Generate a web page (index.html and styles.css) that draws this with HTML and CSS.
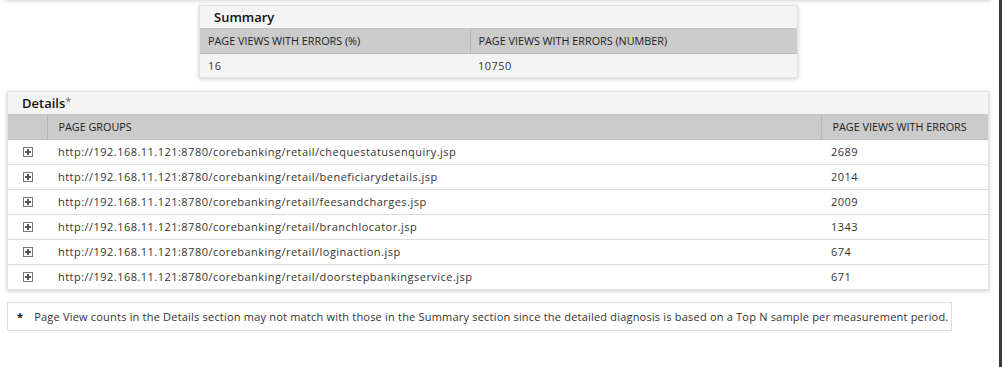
FILE: index.html
```html
<!DOCTYPE html>
<html lang="en">
<head>
    <meta charset="UTF-8">
    <title>Page Views With Errors</title>
    <link rel="stylesheet" href="styles.css">
</head>
<body>
    <div class="page">
        <div class="content">
            <div class="panel-edge"></div>

            <div class="panel summary">
                <h3 class="panel-title">Summary</h3>
                <table class="grid">
                    <thead>
                        <tr>
                            <th class="col-pct">PAGE VIEWS WITH ERRORS (%)</th>
                            <th>PAGE VIEWS WITH ERRORS (NUMBER)</th>
                        </tr>
                    </thead>
                    <tbody>
                        <tr>
                            <td>16</td>
                            <td>10750</td>
                        </tr>
                    </tbody>
                </table>
            </div>

            <div class="panel details">
                <h3 class="panel-title">Details<span class="star">*</span></h3>
                <table class="grid">
                    <thead>
                        <tr>
                            <th class="col-toggle"></th>
                            <th>PAGE GROUPS</th>
                            <th class="col-count">PAGE VIEWS WITH ERRORS</th>
                        </tr>
                    </thead>
                    <tbody>
                        <tr>
                            <td class="col-toggle"><span class="expand"></span></td>
                            <td>http://192.168.11.121:8780/corebanking/retail/chequestatusenquiry.jsp</td>
                            <td>2689</td>
                        </tr>
                        <tr>
                            <td class="col-toggle"><span class="expand"></span></td>
                            <td>http://192.168.11.121:8780/corebanking/retail/beneficiarydetails.jsp</td>
                            <td>2014</td>
                        </tr>
                        <tr>
                            <td class="col-toggle"><span class="expand"></span></td>
                            <td>http://192.168.11.121:8780/corebanking/retail/feesandcharges.jsp</td>
                            <td>2009</td>
                        </tr>
                        <tr>
                            <td class="col-toggle"><span class="expand"></span></td>
                            <td>http://192.168.11.121:8780/corebanking/retail/branchlocator.jsp</td>
                            <td>1343</td>
                        </tr>
                        <tr>
                            <td class="col-toggle"><span class="expand"></span></td>
                            <td>http://192.168.11.121:8780/corebanking/retail/loginaction.jsp</td>
                            <td>674</td>
                        </tr>
                        <tr>
                            <td class="col-toggle"><span class="expand"></span></td>
                            <td>http://192.168.11.121:8780/corebanking/retail/doorstepbankingservice.jsp</td>
                            <td>671</td>
                        </tr>
                    </tbody>
                </table>
            </div>

            <div class="note">
                <span class="note-mark">*</span>
                <span>Page View counts in the Details section may not match with those in the Summary section since the detailed diagnosis is based on a Top N sample per measurement period.</span>
            </div>
        </div>
        <div class="frame-edge"></div>
    </div>
</body>
</html>
```

FILE: styles.css
```css
* {
    margin: 0;
    padding: 0;
    box-sizing: border-box;
}

body {
    font-family: "Open Sans", "DejaVu Sans", sans-serif;
    font-size: 11px;
    color: #333;
    background: white;
    overflow: hidden;
}

.page {
    display: flex;
    height: 367px;
}

.content {
    flex: 1;
    display: flex;
    flex-direction: column;
    align-items: flex-start;
    padding: 0 0 0 7px;
}

.frame-edge {
    width: 3px;
    background: #3a3a3a;
}

/* bottom of the panel scrolled above */
.panel-edge {
    width: 985px;
    height: 6px;
    margin: -6px 0 0 -2px;
    background: white;
    box-shadow: 0 1px 4px rgba(0, 0, 0, 0.18);
}

.panel {
    background: white;
    border: 1px solid #e2e2e2;
    box-shadow: 0 1px 4px rgba(0, 0, 0, 0.22);
}

.summary {
    width: 599px;
    margin: 5px 0 0 192px;
}

.details {
    width: 982px;
    margin-top: 13px;
}

.panel-title {
    background: #f4f4f4;
    font-size: 13px;
    font-weight: 600;
    color: #111;
    height: 23px;
    line-height: 22px;
    padding-left: 14px;
    border-bottom: 1px solid #c4c4c4;
}

.star {
    color: #666;
    font-size: 11px;
    font-weight: 400;
    vertical-align: top;
    line-height: 18px;
}

.grid {
    width: 100%;
    border-collapse: collapse;
}

.grid th {
    background: #cbcbcb;
    font-weight: 400;
    font-size: 10.8px;
    text-align: left;
    height: 24px;
    padding: 0 8px 0 10px;
    border-left: 1px solid #b5b5b5;
    border-bottom: 1px solid #bdbdbd;
    color: #222;
}

.grid th:first-child {
    border-left: none;
}

.grid td {
    height: 25px;
    padding: 0 8px 0 10px;
    border-top: 1px solid #dcdcdc;
    letter-spacing: 0.47px;
}

.summary .grid th {
    padding-left: 8px;
}

.summary .grid td {
    background: #f4f4f4;
    border-top: none;
    padding-left: 8px;
    height: 24px;
}

.summary .col-pct {
    width: 270px;
}

.details .grid td:nth-child(2) {
    padding-left: 11px;
}

.details .grid th:nth-child(2),
.details .col-count {
    padding-left: 11px;
}

.col-toggle {
    width: 39px;
}

.col-count {
    width: 167px;
}

.grid td.col-toggle {
    padding: 0 0 0 15px;
}

.expand {
    display: block;
    width: 10px;
    height: 10px;
    border: 1px solid #777;
    position: relative;
}

.expand::before,
.expand::after {
    content: "";
    position: absolute;
    background: #555;
}

.expand::before {
    left: 1px;
    top: 3px;
    width: 6px;
    height: 2px;
}

.expand::after {
    left: 3px;
    top: 1px;
    width: 2px;
    height: 6px;
}

.note {
    display: flex;
    align-items: center;
    gap: 11px;
    width: 945px;
    height: 29px;
    margin-top: 12px;
    padding-left: 9px;
    border: 1px solid #dcdcdc;
    letter-spacing: 0.2px;
    white-space: nowrap;
}

.note-mark {
    font-weight: 700;
    color: #111;
}
```
